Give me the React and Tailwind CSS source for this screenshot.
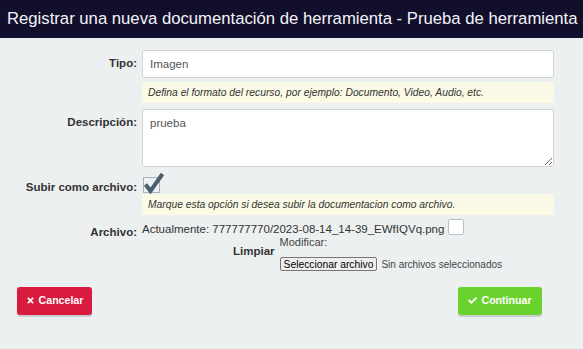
import React from "react";
import { FaTimes, FaCheck } from "react-icons/fa";

function Row({ label, labelClass = "", className = "", children }) {
  return (
    <div className={`flex gap-[5px] ${className}`}>
      <div className={`w-[137px] shrink-0 text-right font-bold text-[11.5px] text-[#333] ${labelClass}`}>{label}</div>
      <div className="flex-1 min-w-0">{children}</div>
    </div>
  );
}

function Help({ children }) {
  return (
    <div className="h-[21px] bg-[#fafae6] px-[6px] flex items-center italic text-[10.3px] text-[#333] whitespace-nowrap">
      {children}
    </div>
  );
}

export default function App() {
  return (
    <div className="min-h-[349px] bg-[#ecf0f1] font-['Liberation_Sans',Arial,sans-serif] text-[#333]">
      <header className="h-[38px] bg-[#110f2c] text-[#f4f4f8] text-[16.7px] pl-[7px] flex items-center whitespace-nowrap overflow-hidden">
        Registrar una nueva documentación de herramienta - Prueba de herramienta
      </header>

      <div className="pt-[12px] pr-[29px]">
        <Row label="Tipo:" labelClass="h-[28px] flex items-center justify-end">
          <input
            readOnly
            value="Imagen"
            className="w-full h-[28px] bg-white border border-[#cfd3d6] rounded-[3px] px-[7px] text-[11.5px] text-[#555] outline-none"
          />
          <div className="mt-[4px]">
            <Help>Defina el formato del recurso, por ejemplo: Documento, Video, Audio, etc.</Help>
          </div>
        </Row>

        <Row label="Descripción:" labelClass="pt-[5px]" className="mt-[6px]">
          <textarea
            readOnly
            defaultValue="prueba"
            className="block w-full h-[58px] bg-white border border-[#cfd3d6] rounded-[3px] px-[7px] pt-[5px] text-[11.5px] text-[#555] outline-none resize-y"
          />
        </Row>

        <Row label="Subir como archivo:" labelClass="h-[17px] flex items-end justify-end leading-none pb-[1px]" className="mt-[10px]">
          <div className="relative h-[17px]">
            <div className="w-[17px] h-[16px] bg-[#eef0f1] border border-[#a9b2b8] ml-[1px]" />
            <svg className="absolute left-[1px] top-[-5px]" width="22" height="22" viewBox="0 0 22 22">
              <path d="M2.5 12.5 L7.5 19 L19.5 2" fill="none" stroke="#4b606e" strokeWidth="4" strokeLinejoin="miter" />
            </svg>
          </div>
          <Help>Marque esta opción si desea subir la documentacion como archivo.</Help>
        </Row>

        <Row label="Archivo:" labelClass="pt-[5px]" className="mt-[4px]">
          <div className="flex items-start text-[11.5px] text-[#333] whitespace-nowrap">
            <span className="pt-[2px]">Actualmente: 777777770/2023-08-14_14-39_EWfIQVq.png</span>
            <span className="ml-[4px] w-[16px] h-[16px] bg-white border border-[#b9c0c5] rounded-[2px]" />
          </div>
          <div className="flex items-start pl-[91px] mt-[-4px] whitespace-nowrap">
            <span className="font-bold text-[11.5px] text-[#333] pt-[9px] mr-[5px]">Limpiar</span>
            <div className="text-[11px] text-[#444]">
              <div>Modificar:</div>
              <div className="flex items-center mt-[6px] text-[10.3px]">
                <span className="h-[14px] px-[3px] flex items-center bg-[#efefef] border border-[#767676] rounded-[2px] text-black">
                  Seleccionar archivo
                </span>
                <span className="ml-[4px] text-[#444] text-[10px]">Sin archivos seleccionados</span>
              </div>
            </div>
          </div>
        </Row>
      </div>

      <div className="flex justify-between pl-[17px] pr-[41px] mt-[15px]">
        <button className="h-[28px] w-[75px] flex items-center justify-center gap-[4px] rounded-[3px] bg-[#d81b3e] text-white font-bold text-[10.6px] shadow-[0_2px_1px_rgba(0,0,0,0.15)]">
          <FaTimes className="w-[9px] h-[9px]" />
          Cancelar
        </button>
        <button className="h-[28px] w-[84px] flex items-center justify-center gap-[4px] rounded-[3px] bg-[#6ad22c] text-white font-bold text-[10.6px] shadow-[0_2px_1px_rgba(0,0,0,0.15)]">
          <FaCheck className="w-[9px] h-[9px]" />
          Continuar
        </button>
      </div>
    </div>
  );
}
